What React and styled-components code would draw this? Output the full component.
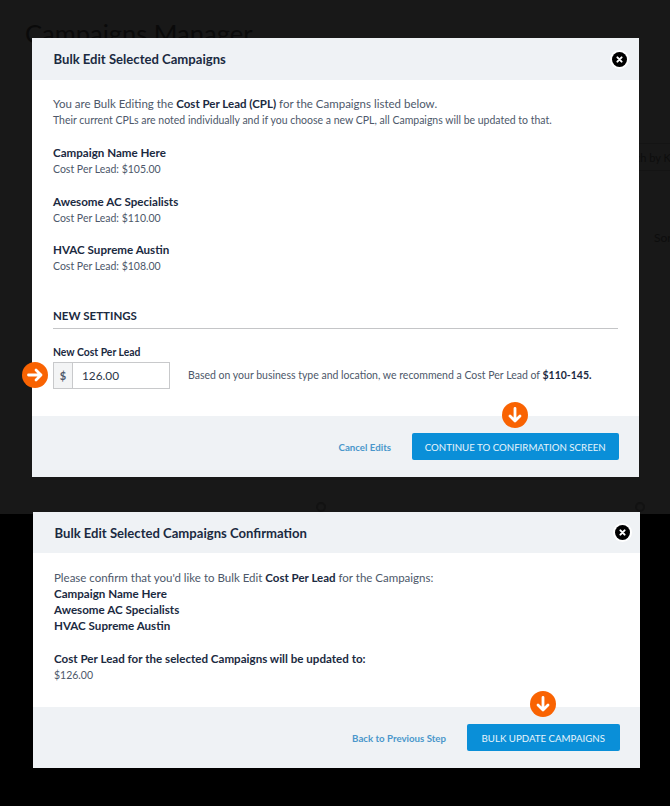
import React from 'react';
import styled, { createGlobalStyle } from 'styled-components';

const GlobalStyle = createGlobalStyle`
  html, body {
    margin: 0;
    padding: 0;
    background: #000;
  }
  * {
    box-sizing: border-box;
  }
  body {
    font-family: Lato, "Open Sans", sans-serif;
    color: #4d586a;
  }
`;

const campaigns = [
  { name: 'Campaign Name Here', cost: '$105.00' },
  { name: 'Awesome AC Specialists', cost: '$110.00' },
  { name: 'HVAC Supreme Austin', cost: '$108.00' },
];

const CloseIcon = () => (
  <svg width="15" height="15" viewBox="0 0 15 15" aria-hidden="true">
    <circle cx="7.5" cy="7.5" r="7.5" fill="#000" />
    <path d="M5.4 5.4l4.2 4.2M9.6 5.4l-4.2 4.2" stroke="#fff" strokeWidth="2" strokeLinecap="round" />
  </svg>
);

const ArrowBadge = ({ direction, className }) => (
  <Badge className={className}>
    <svg width="26" height="26" viewBox="0 0 26 26" aria-hidden="true">
      <circle cx="13" cy="13" r="13" fill="#f96302" />
      <path
        d={
          direction === 'right'
            ? 'M6.5 13h12.5M14 8l5 5-5 5'
            : 'M13 6.5V19M8 14l5 5 5-5'
        }
        fill="none"
        stroke="#fff"
        strokeWidth="2.8"
        strokeLinecap="round"
        strokeLinejoin="round"
      />
    </svg>
  </Badge>
);

function App() {
  return (
    <>
      <GlobalStyle />
      <Page>
        <Backdrop>
          <GhostTitle>Campaigns Manager</GhostTitle>
          <GhostSearch>Search by Keyword</GhostSearch>
          <GhostSort>Sort by</GhostSort>
          <GhostPager $left={316} />
          <GhostPager $left={635} />
          <EditModal>
            <ModalHeader $height={42} $closeInset={12.5}>
              <ModalTitle>Bulk Edit Selected Campaigns</ModalTitle>
              <CloseButton><CloseIcon /></CloseButton>
            </ModalHeader>
            <EditBody>
              <Lead>
                You are Bulk Editing the <strong>Cost Per Lead (CPL)</strong> for the Campaigns listed below.
              </Lead>
              <SubLead>
                Their current CPLs are noted individually and if you choose a new CPL, all Campaigns will be updated to that.
              </SubLead>
              <CampaignList>
                {campaigns.map(c => (
                  <div key={c.name}>
                    <CampaignName>{c.name}</CampaignName>
                    <CampaignCost>Cost Per Lead: {c.cost}</CampaignCost>
                  </div>
                ))}
              </CampaignList>
              <SectionTitle>NEW SETTINGS</SectionTitle>
              <FieldLabel>New Cost Per Lead</FieldLabel>
              <FieldRow>
                <InputGroup>
                  <InputAddon>$</InputAddon>
                  <InputValue>126.00</InputValue>
                  <LeftBadge direction="right" />
                </InputGroup>
                <Hint>
                  Based on your business type and location, we recommend a Cost Per Lead of <strong>$110-145.</strong>
                </Hint>
              </FieldRow>
            </EditBody>
            <ModalFooter>
              <FooterLink>Cancel Edits</FooterLink>
              <PrimaryButton $width={206.5}>
                CONTINUE TO CONFIRMATION SCREEN
                <DownBadge direction="down" $top={-31} />
              </PrimaryButton>
            </ModalFooter>
          </EditModal>
        </Backdrop>
        <ConfirmModal>
          <ModalHeader $height={41} $closeInset={10}>
            <ModalTitle>Bulk Edit Selected Campaigns Confirmation</ModalTitle>
            <CloseButton><CloseIcon /></CloseButton>
          </ModalHeader>
          <ConfirmBody>
            <Lead>
              Please confirm that you'd like to Bulk Edit <strong>Cost Per Lead</strong> for the Campaigns:
            </Lead>
            {campaigns.map(c => (
              <CampaignName key={c.name}>{c.name}</CampaignName>
            ))}
            <UpdateNote>Cost Per Lead for the selected Campaigns will be updated to:</UpdateNote>
            <CampaignCost>$126.00</CampaignCost>
          </ConfirmBody>
          <ModalFooter>
            <FooterLink>Back to Previous Step</FooterLink>
            <PrimaryButton $width={152.5}>
              BULK UPDATE CAMPAIGNS
              <DownBadge direction="down" $top={-33} />
            </PrimaryButton>
          </ModalFooter>
        </ConfirmModal>
      </Page>
    </>
  );
}

export default App;

const Page = styled.div`
  width: 670px;
  height: 806px;
  overflow: hidden;
  background: #000;
`;

const Backdrop = styled.div`
  position: relative;
  height: 514px;
  padding: 38px 0 0 32px;
  background: #181818;
`;

const GhostTitle = styled.div`
  position: absolute;
  top: 17px;
  left: 25px;
  font-size: 25.5px;
  line-height: 32px;
  color: #0a0a0a;
  white-space: nowrap;
`;

const GhostSearch = styled.div`
  position: absolute;
  top: 143px;
  left: 614px;
  width: 80px;
  height: 28px;
  font-size: 11px;
  line-height: 27px;
  color: #0d0d0d;
  white-space: nowrap;
  border-top: 1px solid #141414;
  border-bottom: 1px solid #141414;
`;

const GhostSort = styled.div`
  position: absolute;
  top: 230px;
  left: 654px;
  font-size: 12px;
  color: #0d0d0d;
  white-space: nowrap;
`;

const GhostPager = styled.div`
  position: absolute;
  top: 502px;
  left: ${p => p.$left}px;
  width: 10px;
  height: 10px;
  border: 2px solid #121212;
  border-radius: 50%;
`;

const Modal = styled.section`
  position: relative;
  display: flex;
  flex-direction: column;
  width: 607px;
  background: #fff;
`;

const EditModal = styled(Modal)`
  height: 439px;
`;

const ConfirmModal = styled(Modal)`
  height: 256px;
  margin: -2px 0 0 33px;
`;

const ModalHeader = styled.header`
  flex: none;
  display: flex;
  align-items: center;
  justify-content: space-between;
  height: ${p => p.$height}px;
  padding: 0 ${p => p.$closeInset}px 0 21.5px;
  background: #eff2f5;
`;

const ModalTitle = styled.h2`
  margin: 0;
  font-size: 13.1px;
  font-weight: 700;
  color: #1b2a41;
`;

const CloseButton = styled.span`
  display: flex;
  width: 15px;
  height: 15px;
  border-radius: 50%;
  box-shadow: 0 0 0 2px #fff;
`;

const EditBody = styled.div`
  flex: 1;
  padding: 16px 21px 0 21px;
`;

const ConfirmBody = styled.div`
  flex: 1;
  padding: 17px 21px 0 21px;
`;

const Lead = styled.p`
  margin: 0;
  font-size: 11.5px;
  line-height: 16px;
  color: #4d586a;

  strong {
    font-weight: 700;
    color: #1b2a41;
  }
`;

const SubLead = styled.p`
  margin: 0;
  font-size: 10.5px;
  line-height: 17px;
  color: #4d586a;
`;

const CampaignList = styled.div`
  display: flex;
  flex-direction: column;
  gap: 16px;
  margin-top: 16px;
`;

const CampaignName = styled.div`
  font-size: 11.6px;
  line-height: 16px;
  font-weight: 700;
  color: #1b2a41;
`;

const CampaignCost = styled.div`
  font-size: 10.5px;
  line-height: 16.5px;
  color: #4d586a;
`;

const UpdateNote = styled(CampaignName)`
  margin-top: 16.5px;
`;

const SectionTitle = styled.h3`
  margin: 33px 0 0;
  padding-bottom: 4px;
  font-size: 11.5px;
  line-height: 16px;
  font-weight: 700;
  color: #1b2a41;
  border-bottom: 1px solid #c4c5c7;
`;

const FieldLabel = styled.div`
  margin-top: 15px;
  font-size: 10.4px;
  line-height: 16px;
  font-weight: 700;
  color: #1b2a41;
`;

const FieldRow = styled.div`
  display: flex;
  align-items: center;
  gap: 18px;
  margin-top: 2px;
`;

const InputGroup = styled.div`
  position: relative;
  flex: none;
  display: flex;
  width: 117px;
  height: 27px;
  border: 1px solid #c8c9cb;
`;

const InputAddon = styled.span`
  flex: none;
  display: flex;
  align-items: center;
  justify-content: center;
  width: 19px;
  font-size: 11px;
  font-weight: 700;
  color: #4d586a;
  background: #f3f4f5;
  border-right: 1px solid #c8c9cb;
`;

const InputValue = styled.span`
  display: flex;
  align-items: center;
  padding-left: 9px;
  font-size: 11.8px;
  color: #2b3648;
`;

const Hint = styled.p`
  margin: 0;
  font-size: 10.5px;
  line-height: 16px;
  color: #4d586a;
  white-space: nowrap;

  strong {
    font-weight: 700;
    color: #1b2a41;
  }
`;

const ModalFooter = styled.footer`
  flex: none;
  display: flex;
  align-items: center;
  justify-content: flex-end;
  gap: 21px;
  height: 61px;
  padding: 0 20.5px 0 0;
  background: #eff2f5;
`;

const FooterLink = styled.a`
  font-size: 9.7px;
  font-weight: 700;
  color: #4a97cb;
`;

const PrimaryButton = styled.button`
  position: relative;
  flex: none;
  width: ${p => p.$width}px;
  height: 27px;
  padding: 0;
  border: none;
  border-radius: 2px;
  background: #0a8fd8;
  color: #e6f4fb;
  font-family: inherit;
  font-size: 9.7px;
  white-space: nowrap;
`;

const Badge = styled.span`
  position: absolute;
  display: block;
  width: 26px;
  height: 26px;
  line-height: 0;
`;

const LeftBadge = styled(ArrowBadge)`
  top: -1px;
  left: -32px;
`;

const DownBadge = styled(ArrowBadge)`
  top: ${p => p.$top}px;
  left: 50%;
  margin-left: -13px;
`;
